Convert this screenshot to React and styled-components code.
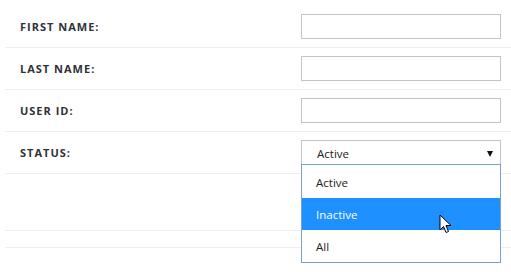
import React from "react";
import styled, { createGlobalStyle } from "styled-components";

const Global = createGlobalStyle`
  html, body {
    margin: 0;
    padding: 0;
    background: #fff;
    min-height: 272px;
  }
  body {
    font-family: "Open Sans", "Noto Sans", sans-serif;
  }
`;

const Form = styled.div`
  padding: 6px 0 25px 5px;
  width: 506px;
`;

const Row = styled.div`
  display: flex;
  align-items: center;
  justify-content: space-between;
  height: ${(p) => p.h || 41}px;
  border-bottom: 1px solid #efefef;
  padding: 0 10px 0 15px;
  position: relative;
`;

const Label = styled.label`
  font-size: 11px;
  font-weight: 700;
  letter-spacing: 1px;
  color: #2f3138;
  text-transform: uppercase;
`;

const Input = styled.input`
  box-sizing: border-box;
  width: 200px;
  height: 25px;
  border: 1px solid #c8c2c5;
  background: #fff;
  outline: none;
`;

const SelectWrap = styled.div`
  position: relative;
  width: 200px;
`;

const SelectBox = styled.div`
  box-sizing: border-box;
  height: 25px;
  border: 1px solid #c8c2c5;
  border-bottom: none;
  display: flex;
  align-items: center;
  justify-content: space-between;
  padding: 0 7px 0 15px;
  font-size: 11.5px;
  color: #222;
`;

const Arrow = styled.span`
  width: 0;
  height: 0;
  border-left: 3.5px solid transparent;
  border-right: 3.5px solid transparent;
  border-top: 6px solid #111;
  margin-top: 1px;
`;

const Menu = styled.ul`
  position: absolute;
  top: 24px;
  left: 0;
  box-sizing: border-box;
  width: 200px;
  margin: 0;
  padding: 1px 0 0;
  list-style: none;
  background: #fff;
  border: 1px solid #7b9ed6;
  z-index: 2;
`;

const Option = styled.li`
  height: 32px;
  display: flex;
  align-items: center;
  padding-left: 14px;
  font-size: 11.5px;
  color: ${(p) => (p.active ? "#fff" : "#222")};
  background: ${(p) => (p.active ? "#1e90ff" : "transparent")};
  position: relative;
`;

const Cursor = styled.svg`
  position: absolute;
  left: 137px;
  top: 16px;
`;

export default function App() {
  return (
    <>
      <Global />
      <Form>
        <Row>
          <Label>First Name:</Label>
          <Input />
        </Row>
        <Row>
          <Label>Last Name:</Label>
          <Input />
        </Row>
        <Row>
          <Label>User ID:</Label>
          <Input />
        </Row>
        <Row>
          <Label>Status:</Label>
          <SelectWrap>
            <SelectBox>
              Active
              <Arrow />
            </SelectBox>
            <Menu>
              <Option>Active</Option>
              <Option active>
                Inactive
                <Cursor width="14" height="21" viewBox="0 0 14 21">
                  <path
                    d="M1 1 L1 16 L4.5 12.5 L7 18.5 L9.5 17.5 L7 11.5 L12 11.5 Z"
                    fill="#fff"
                    stroke="#000"
                    strokeWidth="1"
                    strokeLinejoin="miter"
                  />
                </Cursor>
              </Option>
              <Option>All</Option>
            </Menu>
          </SelectWrap>
        </Row>
        <Row h={56} />
        <Row h={16} />
      </Form>
    </>
  );
}
